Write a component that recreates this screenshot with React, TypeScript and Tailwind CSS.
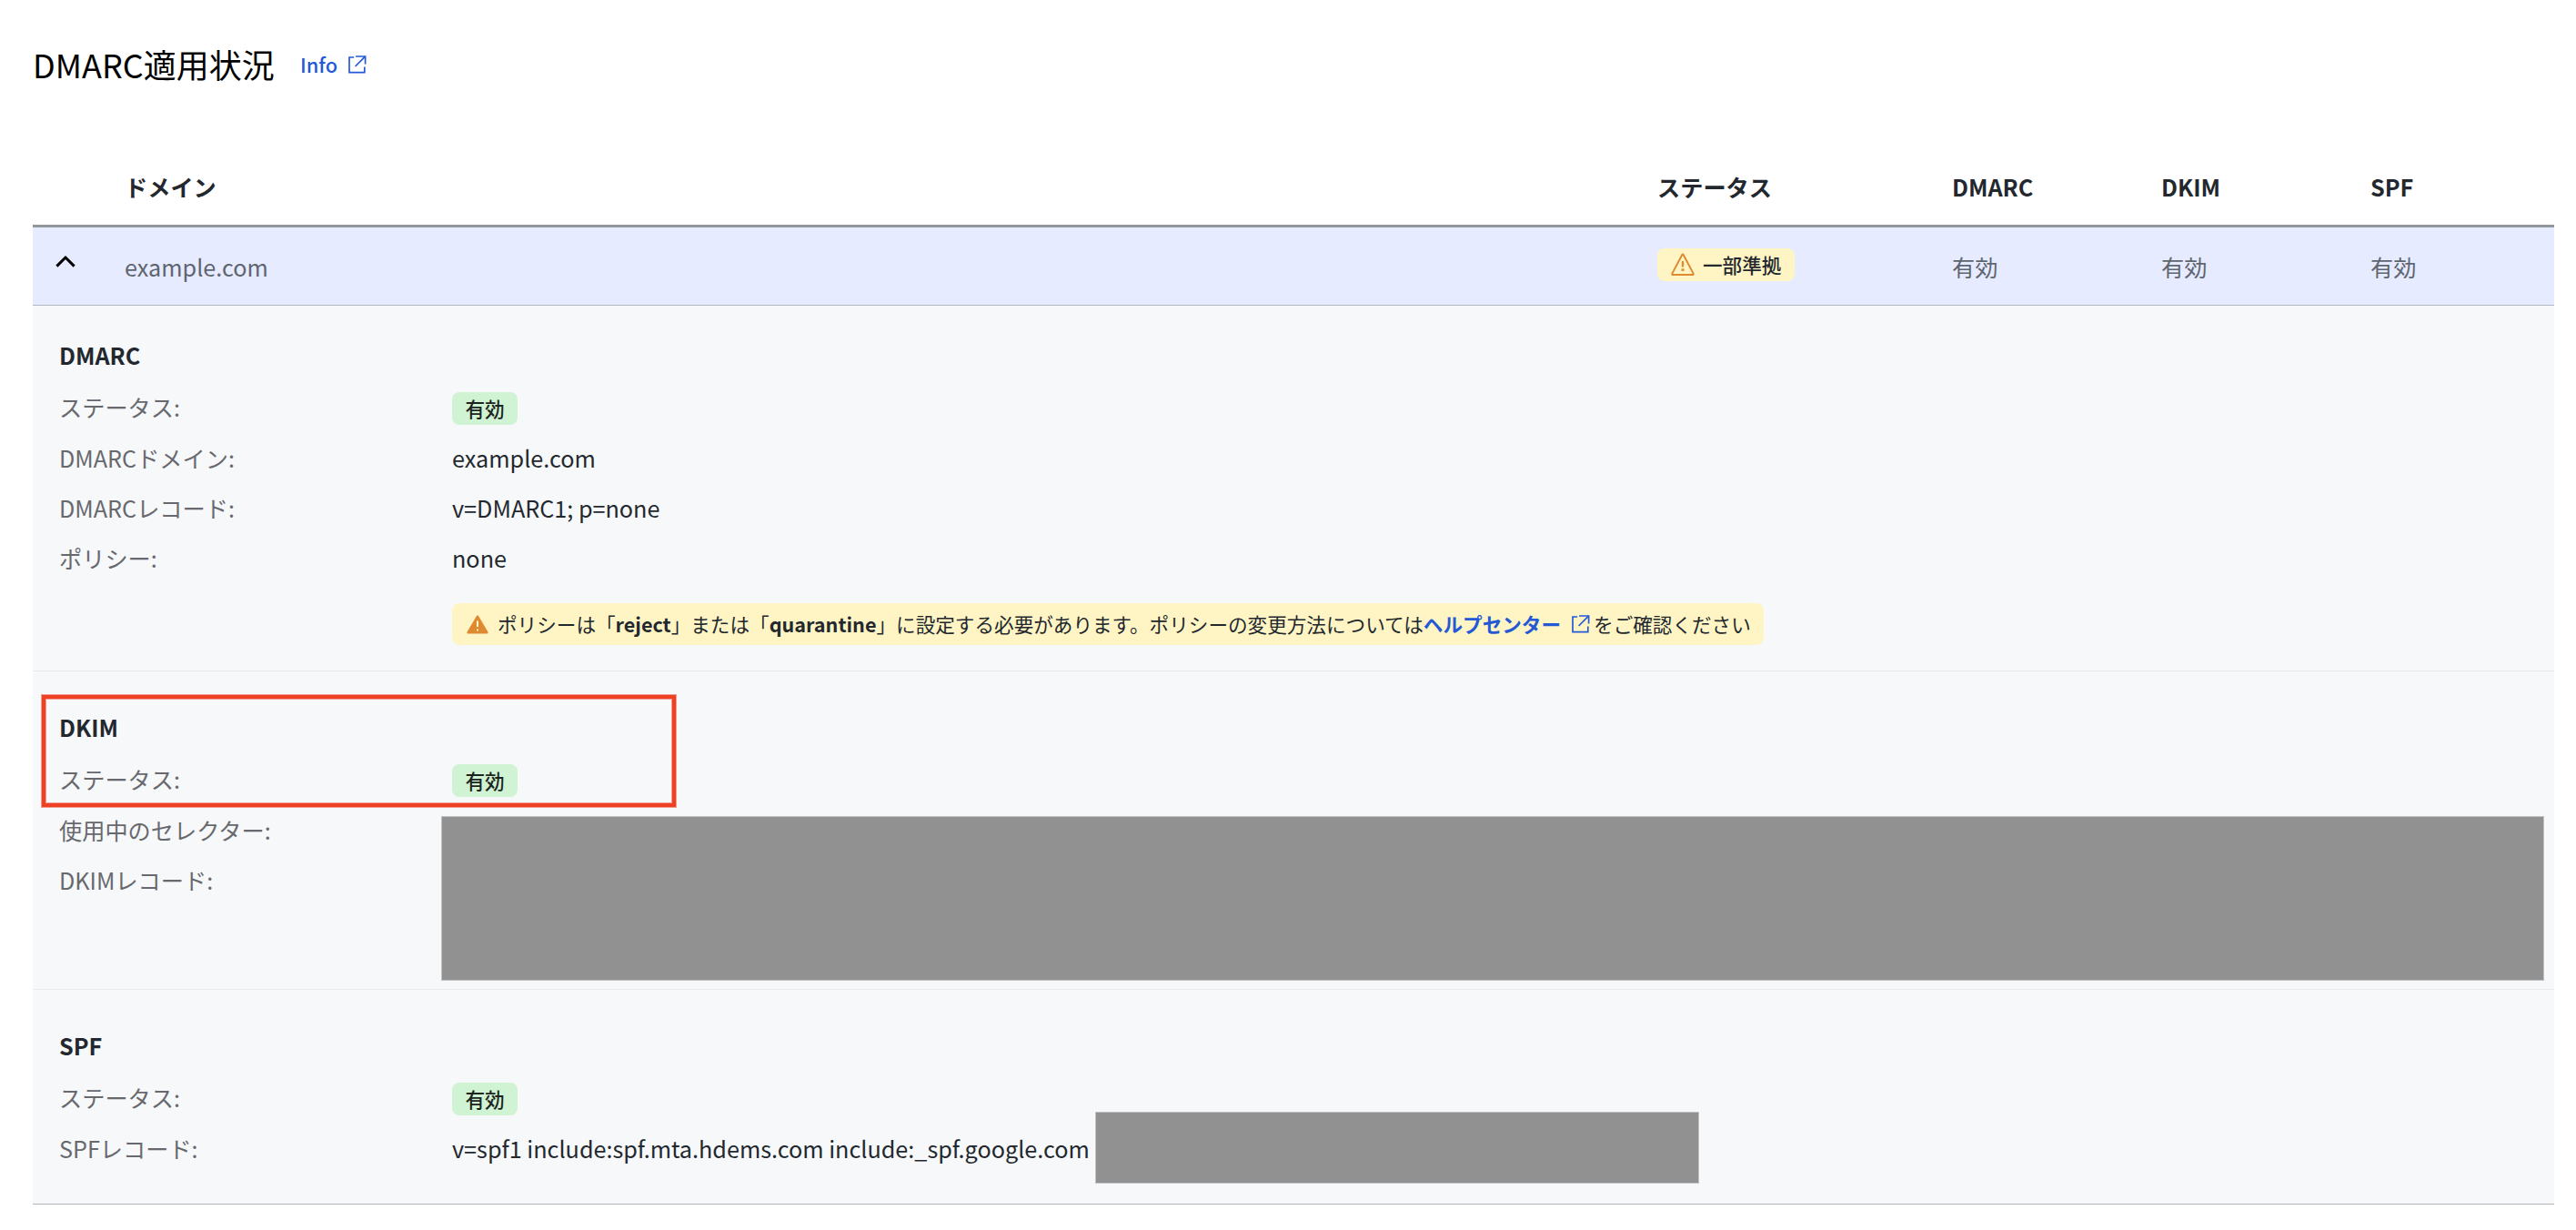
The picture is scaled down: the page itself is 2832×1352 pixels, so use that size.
import type { ReactNode } from "react";

const columns = "grid grid-cols-[101px_1685px_324px_230px_230px_1fr]";

const ExternalIcon = () => (
  <svg width="20" height="20" viewBox="0 0 20 20" fill="none" stroke="currentColor" strokeWidth="1.7" className="shrink-0">
    <path d="M6.2 2H1V18.6H17.8V12.6" />
    <path d="M8 1H18.6V9.6" />
    <path d="M18.4 1.2L7.6 12" />
  </svg>
);

const WarningIcon = () => (
  <svg width="26" height="26" viewBox="0 0 26 26" fill="none" stroke="#df8a30" strokeWidth="2" strokeLinejoin="round" className="shrink-0">
    <path d="M12.2 2.2Q13 .9 13.8 2.2L24.6 22.6Q25 24 23.8 24H2.2Q1 24 1.4 22.6Z" />
    <path d="M13 10V14.4" strokeWidth="2.4" strokeLinecap="round" />
    <path d="M11.5 18.6H14.5" strokeWidth="2.6" />
  </svg>
);

const WarningSolidIcon = () => (
  <svg width="24" height="21" viewBox="0 0 24 21" className="shrink-0">
    <path d="M11 1Q12 -.4 13 1L23.4 18.6Q24 20.4 22.4 20.6H1.6Q0 20.4 .6 18.6Z" fill="#df8a30" />
    <path d="M12 6.5V13" stroke="#fff5c4" strokeWidth="2" />
    <path d="M12 15.4V17.6" stroke="#fff5c4" strokeWidth="2" />
  </svg>
);

const ActiveBadge = () => (
  <span className="flex h-9 w-[72px] items-center justify-center rounded-lg bg-[#d0f3d4] text-[21.6px] font-medium text-[#1c2420]">
    有効
  </span>
);

const StatusRow = () => (
  <div className="mt-3.5 -mb-px flex h-[54px] items-center">
    <span className="w-[432px] pb-1 text-[#68696e]">ステータス:</span>
    <ActiveBadge />
  </div>
);

const Row = ({ label, children }: { label: string; children?: ReactNode }) => (
  <div className="flex h-[55px] items-center">
    <span className="w-[432px] text-[#68696e]">{label}</span>
    <span>{children}</span>
  </div>
);

export default function App() {
  return (
    <div className="h-[1352px] w-[2832px] overflow-hidden bg-white pt-11 pr-6 pl-9 font-['Noto_Sans_CJK_JP','Noto_Sans',sans-serif] text-[25.2px] leading-9 whitespace-nowrap text-[#23282f]">
      <header className="flex h-[52px] items-center">
        <h1 className="w-[294px] text-4xl leading-[52px] text-black">DMARC適用状況</h1>
        <a className="flex items-center gap-3 pt-px text-[21.8px] font-medium text-[#2459d6]">
          Info
          <ExternalIcon />
        </a>
      </header>

      <div className={`${columns} mt-16 h-[90px] items-center border-b-3 border-[#92979e] pt-[3px] font-bold`}>
        <span />
        <span>ドメイン</span>
        <span>ステータス</span>
        <span>DMARC</span>
        <span>DKIM</span>
        <span>SPF</span>
      </div>

      <div className={`${columns} h-[86px] items-center border-b border-[#b0b7c0] bg-[#e6ebff] text-[#5f6570]`}>
        <svg width="24" height="16" viewBox="0 0 24 16" fill="none" stroke="#000" strokeWidth="3" className="mb-3 ml-6">
          <path d="M2.4 13.6L12 4L21.6 13.6" />
        </svg>
        <span>example.com</span>
        <span className="mb-[3px] flex h-9 w-[151px] items-center gap-[9px] rounded-lg bg-[#fff5c4] pl-[15px] text-[21.6px] font-medium text-[#23282f]">
          <WarningIcon />
          一部準拠
        </span>
        <span>有効</span>
        <span>有効</span>
        <span>有効</span>
      </div>

      <section className="h-[402px] border-b border-[#e8eaed] bg-[#f7f8fa] px-[29px] pt-9">
        <h2 className="font-bold">DMARC</h2>
        <StatusRow />
        <Row label="DMARCドメイン:">example.com</Row>
        <Row label="DMARCレコード:">v=DMARC1; p=none</Row>
        <Row label="ポリシー:">none</Row>
        <div className="mt-[23px] ml-[432px] flex h-[46px] w-[1442px] items-center rounded-lg bg-[#fff5c4] pl-4 text-[21.6px]">
          <WarningSolidIcon />
          <p className="ml-2.5 flex items-center">
            ポリシーは「<b>reject</b>」または「<b>quarantine</b>」に設定する必要があります。ポリシーの変更方法については
            <a className="mr-1 flex items-center gap-3 font-bold text-[#2459d6]">
              ヘルプセンター
              <ExternalIcon />
            </a>
            をご確認ください
          </p>
        </div>
      </section>

      <section className="relative h-[350px] border-b border-[#e8eaed] bg-[#f7f8fa] px-[29px] pt-[43px]">
        <h2 className="font-bold">DKIM</h2>
        <StatusRow />
        <Row label="使用中のセレクター:" />
        <Row label="DKIMレコード:" />
        {/* highlight frame */}
        <div className="absolute top-[26px] left-2.5 h-[123px] w-[697px] border-4 border-[#ee4023] shadow-[0_0_0_1px_#ee402380,inset_0_0_0_1px_#ee402380]" />
        {/* masked selector and record */}
        <div className="absolute top-[159px] left-[449px] h-[181px] w-[2312px] border border-[#c0c1c2] bg-[#919191]" />
      </section>

      <section className="relative h-[236px] border-b border-[#b0b4bb] bg-[#f7f8fa] px-[29px] pt-[43px]">
        <h2 className="font-bold">SPF</h2>
        <StatusRow />
        <Row label="SPFレコード:">v=spf1 include:spf.mta.hdems.com include:_spf.google.com</Row>
        <div className="absolute top-[134px] left-[1168px] h-[79px] w-[664px] border border-[#c0c1c2] bg-[#919191]" />
      </section>
    </div>
  );
}
